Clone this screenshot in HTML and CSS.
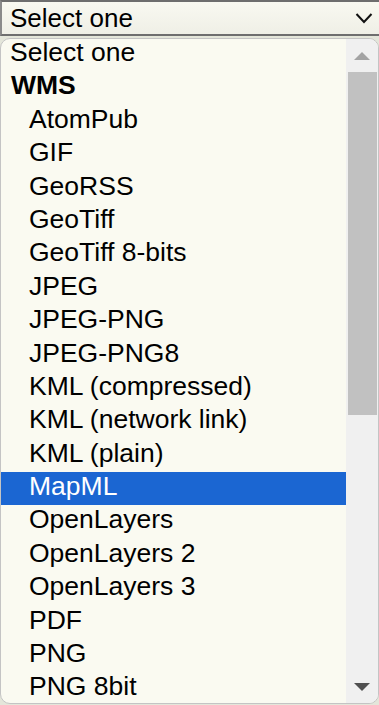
FILE: index.html
```html
<!DOCTYPE html>
<html lang="en">

<head>
    <meta charset="UTF-8">
    <meta name="viewport" content="width=device-width, initial-scale=1.0">
    <title>Format</title>
    <link rel="stylesheet" href="styles.css">
</head>

<body>
    <div class="select">
        <span class="select-value">Select one</span>
        <svg class="chevron" width="18" height="12" viewBox="0 0 18 12">
            <polyline points="1.5,2 9,10 16.5,2" fill="none" stroke="#111" stroke-width="2" />
        </svg>
    </div>
    <div class="dropdown">
        <ul class="options">
            <li class="option">Select one</li>
            <li class="group">WMS</li>
            <li class="option sub">AtomPub</li>
            <li class="option sub">GIF</li>
            <li class="option sub">GeoRSS</li>
            <li class="option sub">GeoTiff</li>
            <li class="option sub">GeoTiff 8-bits</li>
            <li class="option sub">JPEG</li>
            <li class="option sub">JPEG-PNG</li>
            <li class="option sub">JPEG-PNG8</li>
            <li class="option sub">KML (compressed)</li>
            <li class="option sub">KML (network link)</li>
            <li class="option sub">KML (plain)</li>
            <li class="option sub selected">MapML</li>
            <li class="option sub">OpenLayers</li>
            <li class="option sub">OpenLayers 2</li>
            <li class="option sub">OpenLayers 3</li>
            <li class="option sub">PDF</li>
            <li class="option sub">PNG</li>
            <li class="option sub">PNG 8bit</li>
        </ul>
        <div class="scrollbar">
            <div class="arrow up"></div>
            <div class="track">
                <div class="thumb"></div>
            </div>
            <div class="arrow down"></div>
        </div>
    </div>
</body>

</html>
```

FILE: styles.css
```css
* {
    padding: 0;
    margin: 0;
    box-sizing: border-box;
}

body {
    font-family: "Liberation Sans", Arial, sans-serif;
    background-color: #e4e6da;
    height: 705px;
    overflow: hidden;
    color: #000;
}

.select {
    height: 36px;
    display: flex;
    align-items: center;
    justify-content: space-between;
    padding: 0 6px 0 8px;
    border-top: 2px solid #6e6e6e;
    border-left: 2px solid #8a8a8a;
    border-bottom: 2px solid #6e6e6e;
    background: linear-gradient(to bottom, #f9f9f1, #efefe6);
    font-size: 26px;
    margin-bottom: 2px;
}

.chevron {
    display: block;
}

.dropdown {
    height: 666px;
    display: flex;
    border: 1px solid #c4c4c4;
    border-radius: 10px;
    background-color: #fafaf1;
    overflow: hidden;
}

.options {
    list-style: none;
    flex: 1;
    margin-top: -1px;
}

.options li {
    height: 33.4px;
    line-height: 29px;
    font-size: 26.5px;
    padding-left: 9px;
    white-space: nowrap;
}

.options .group {
    font-weight: bold;
    padding-left: 10px;
}

.options .sub {
    padding-left: 28px;
}

.options .selected {
    background-color: #1b66d2;
    color: #fff;
}

.scrollbar {
    width: 32px;
    background-color: #f0f0f0;
    display: flex;
    flex-direction: column;
    align-items: center;
}

.arrow {
    height: 33px;
    width: 100%;
    display: flex;
    align-items: center;
    justify-content: center;
}

.arrow::before {
    content: '';
    border-left: 8px solid transparent;
    border-right: 8px solid transparent;
}

.arrow.up::before {
    border-bottom: 8px solid #a3a3a3;
}

.arrow.down::before {
    border-top: 8px solid #505050;
}

.track {
    flex: 1;
    width: 100%;
    padding: 0 1px 0 2px;
}

.thumb {
    height: 343px;
    background-color: #c1c1c1;
}
```
